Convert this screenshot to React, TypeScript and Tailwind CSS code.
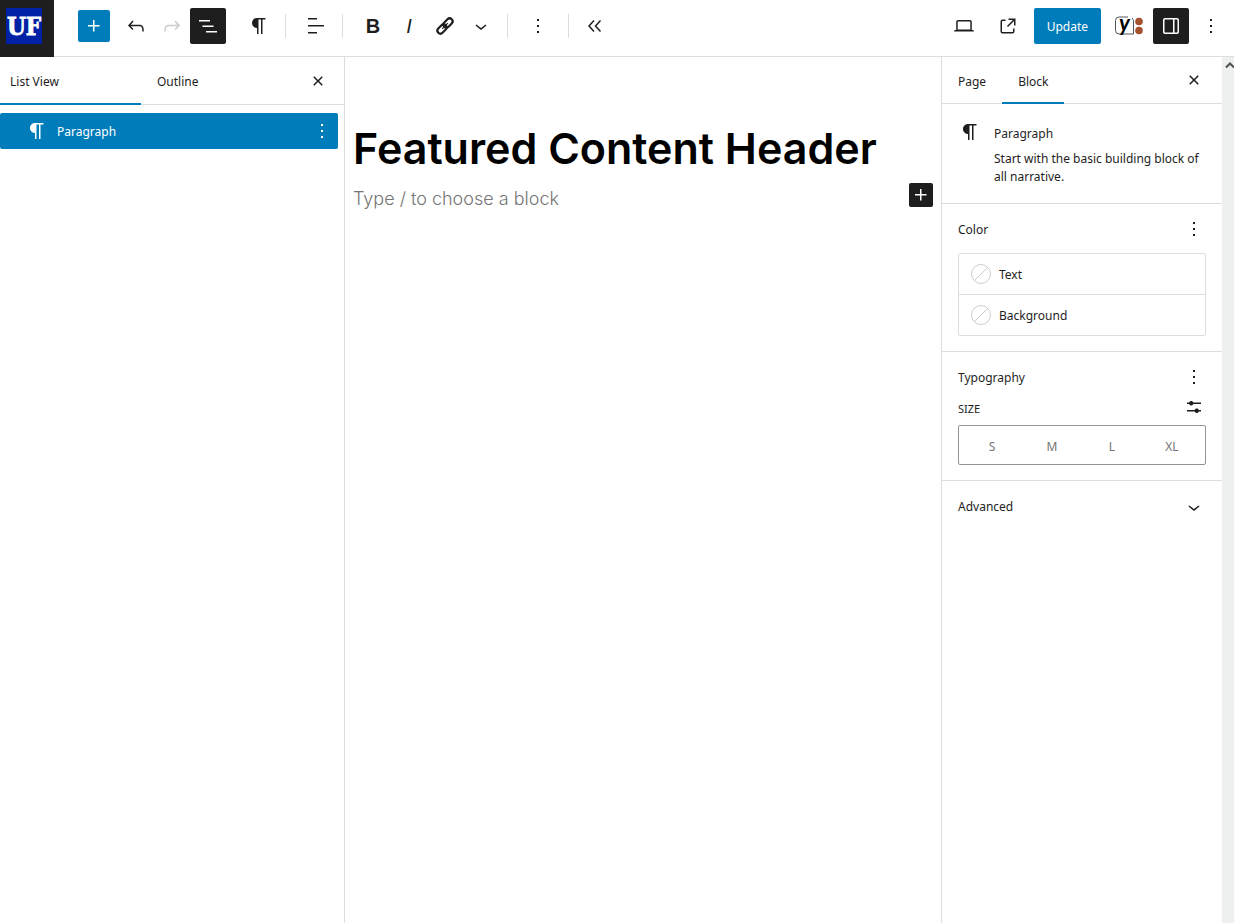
import { useState, type ReactNode } from 'react'

const ICONS = {
  plus: 'M11 12.5V17.5H12.5V12.5H17.5V11H12.5V6H11V11H6V12.5H11Z',
  undo: 'M18.3 11.7c-.6-.6-1.4-.9-2.3-.9H6.7l2.9-3.3-1.1-1-4.5 5L8.5 16l1-1-2.7-2.7H16c.5 0 .9.2 1.3.5 1 1 1 3.4 1 4.5v.3h1.5v-.2c0-1.5 0-4.3-1.5-5.7z',
  redo: 'M15.6 6.5l-1.1 1 2.9 3.3H8c-.9 0-1.7.3-2.3.9-1.4 1.5-1.4 4.2-1.4 5.6v.2h1.5v-.3c0-1.1 0-3.5 1-4.5.3-.3.7-.5 1.3-.5h9.2L14.5 15l1.1 1.1 4.6-4.6-4.6-5z',
  listView: 'M3 6h11v1.5H3V6Zm3.5 5.5h11V13h-11v-1.5ZM21 17H10v1.5h11V17Z',
  paragraph: 'm9.996 14v-.225l.004.001v6.224h1.5v-14.5h2.5v14.5h1.5v-14.5h3v-1.5h-8.504c-2.761 0-5 2.239-5 5 0 2.761 2.239 5 5 5z',
  align: 'M13 5.5H4V4h9v1.5Zm7 7H4V11h16v1.5Zm-7 7H4V18h9v1.5Z',
  chevronDown: 'M17.5 11.6L12 16l-5.5-4.4.9-1.2L12 14l4.5-3.6 1 1.2z',
  more: 'M13 19h-2v-2h2v2zm0-6h-2v-2h2v2zm0-6h-2V5h2v2z',
  close: 'M12 13.06l3.712 3.713 1.061-1.06L13.061 12l3.712-3.712-1.06-1.06L12 10.938 8.288 7.227l-1.061 1.06L10.939 12l-3.712 3.712 1.06 1.061L12 13.061z',
  laptop: 'M20.5 16h-.7V8c0-1.1-.9-2-2-2H6.2c-1.1 0-2 .9-2 2v8h-.7c-.8 0-1.5.7-1.5 1.5h20c0-.8-.7-1.5-1.5-1.5zM5.7 8c0-.3.2-.5.5-.5h11.6c.3 0 .5.2.5.5v7.6H5.7V8z',
  external: 'M19.5 4.5h-7V6h4.44l-5.97 5.97 1.06 1.06L18 7.06v4.44h1.5v-7Zm-13 1a2 2 0 0 0-2 2v10a2 2 0 0 0 2 2h10a2 2 0 0 0 2-2v-3H17v3a.5.5 0 0 1-.5.5h-10a.5.5 0 0 1-.5-.5v-10a.5.5 0 0 1 .5-.5h3V5.5h-3Z',
  drawer: 'M18 4H6c-1.1 0-2 .9-2 2v12c0 1.1.9 2 2 2h12c1.1 0 2-.9 2-2V6c0-1.1-.9-2-2-2zm-4 14.5H6c-.3 0-.5-.2-.5-.5V6c0-.3.2-.5.5-.5h8v13zm4.5-.5c0 .3-.2.5-.5.5h-2.5v-13H18c.3 0 .5.2.5.5v12z',
  settings: 'm19 7.5h-7.628c-.309-.874-1.142-1.5-2.122-1.5-.98 0-1.813.626-2.122 1.5h-2.128v1.5h2.128c.309.874 1.142 1.5 2.122 1.5.98 0 1.813-.626 2.122-1.5h7.628zM19 15h-2.128c-.309-.874-1.142-1.5-2.122-1.5s-1.813.626-2.122 1.5h-7.628v1.5h7.628c.309.874 1.142 1.5 2.122 1.5s1.813-.626 2.122-1.5h2.128z',
}

function Icon({ name }: { name: keyof typeof ICONS }) {
  return (
    <svg width="24" height="24" viewBox="0 0 24 24" fill="currentColor" className="shrink-0" aria-hidden="true">
      <path d={ICONS[name]} />
    </svg>
  )
}

function LinkIcon() {
  return (
    <svg width="24" height="24" viewBox="0 0 24 24" fill="none" stroke="currentColor" strokeWidth="2.2" aria-hidden="true">
      <g transform="rotate(-45 12 12)">
        <rect x="2.5" y="9" width="10.5" height="6" rx="3" />
        <rect x="11" y="9" width="10.5" height="6" rx="3" />
        <path d="M8 12h8" strokeWidth="1.2" />
      </g>
    </svg>
  )
}

function CollapseIcon() {
  return (
    <svg width="24" height="24" viewBox="0 0 24 24" fill="none" stroke="currentColor" strokeWidth="1.5" aria-hidden="true">
      <path d="M11 6.5 6 12l5 5.5M17.500 6.5l-5 5.5 5 5.5" />
    </svg>
  )
}

function YoastIcon() {
  return (
    <svg width="34" height="28" viewBox="-4 0 34 28" className="shrink-0" fill="none" aria-hidden="true">
      <path d="M14 5H5A3.5 3.5 0 0 0 1.5 8.5v10A3.5 3.500 0 0 0 5 22h14.500V9a4 4 0 0 0-1.500-3" stroke="#50575e" />
      <text x="5" y="19" fill="#000" fontFamily="Lato, sans-serif" fontWeight="700" fontStyle="italic" fontSize="22">y</text>
      <circle cx="25" cy="9.5" r="3.8" fill="#a4512f" />
      <circle cx="25" cy="18.5" r="3.8" fill="#a4512f" />
    </svg>
  )
}

function Logo() {
  return (
    <svg width="36" height="36" viewBox="0 0 36 36" role="img" aria-label="UF">
      <rect width="36" height="36" fill="#0021a5" />
      <text
        x="18"
        y="27"
        textAnchor="middle"
        fill="#fff"
        stroke="#fff"
        strokeWidth="0.8"
        fontFamily="'DejaVu Serif Condensed', 'DejaVu Serif', serif"
        fontWeight="700"
        fontSize="24"
      >
        UF
      </text>
    </svg>
  )
}

type ToolProps = { label: string; children: ReactNode; dark?: boolean; disabled?: boolean }

function Tool({ label, children, dark, disabled }: ToolProps) {
  return (
    <button
      aria-label={label}
      disabled={disabled}
      className={`flex size-9 shrink-0 items-center justify-center rounded-xs ${
        dark ? 'bg-[#1e1e1e] text-white' : disabled ? 'text-[#ccc]' : 'text-[#1e1e1e]'
      }`}
    >
      {children}
    </button>
  )
}

function Divider() {
  return <div className="h-6 w-px shrink-0 bg-[#ddd]" />
}

function Header() {
  return (
    <header className="flex h-[57px] shrink-0 border-b border-[#ddd]">
      <a href="#" aria-label="View Pages" className="-mb-px w-[54px] shrink-0 bg-[#1e1e1e] pt-2 pl-[6px]">
        <Logo />
      </a>
      <div className="flex h-[52px] items-center pl-6">
        <button aria-label="Toggle block inserter" className="mr-2 flex size-8 items-center justify-center rounded-xs bg-[#007cba] text-white">
          <Icon name="plus" />
        </button>
        <Tool label="Undo"><Icon name="undo" /></Tool>
        <Tool label="Redo" disabled><Icon name="redo" /></Tool>
        <Tool label="Document Overview" dark><Icon name="listView" /></Tool>
        <div className="flex items-center pr-2 pl-[15px]">
          <Tool label="Paragraph"><Icon name="paragraph" /></Tool>
        </div>
        <Divider />
        <div className="flex items-center pr-2 pl-3">
          <Tool label="Align text"><Icon name="align" /></Tool>
        </div>
        <Divider />
        <div className="flex items-center pr-2 pl-3">
          <Tool label="Bold"><span className="font-['Liberation_Sans',sans-serif] text-[20px] font-bold">B</span></Tool>
          <Tool label="Italic"><span className="font-['Liberation_Sans',sans-serif] text-[20px] italic">I</span></Tool>
          <Tool label="Link"><LinkIcon /></Tool>
          <Tool label="More"><Icon name="chevronDown" /></Tool>
        </div>
        <Divider />
        <div className="flex items-center px-3">
          <Tool label="Options"><Icon name="more" /></Tool>
        </div>
        <Divider />
        <div className="flex items-center px-2">
          <Tool label="Hide block tools"><CollapseIcon /></Tool>
        </div>
      </div>
      <div className="ml-auto flex h-[52px] items-center gap-2 pr-[9px]">
        <Tool label="Preview"><Icon name="laptop" /></Tool>
        <Tool label="View Page"><Icon name="external" /></Tool>
        <button className="h-9 rounded-xs bg-[#007cba] px-[13px] pt-[2px] text-white">Update</button>
        <button aria-label="Yoast SEO" className="flex size-9 items-center justify-center"><YoastIcon /></button>
        <Tool label="Settings" dark><Icon name="drawer" /></Tool>
        <button aria-label="Options" className="flex h-9 w-7 items-center justify-center text-[#1e1e1e]"><Icon name="more" /></button>
      </div>
    </header>
  )
}

function ListViewPanel() {
  const [tab, setTab] = useState('List View')

  return (
    <aside className="w-[345px] shrink-0 border-r border-[#ddd]">
      <div className="flex h-12 border-b border-[#ddd]">
        {['List View', 'Outline'].map((t) => (
          <button
            key={t}
            onClick={() => setTab(t)}
            className={`-mb-px w-[141px] border-b-2 pt-1 text-left ${
              t === tab ? 'border-[#007cba] px-[10px]' : 'border-transparent px-4'
            }`}
          >
            {t}
          </button>
        ))}
        <button aria-label="Close" className="mr-[14px] ml-auto"><Icon name="close" /></button>
      </div>
      <div className="mt-2 mr-[6px] flex h-9 items-center rounded-xs bg-[#007cba] pr-1 pl-[25px] text-white">
        <button className="flex flex-1 items-center gap-2">
          <Icon name="paragraph" />
          <span className="pt-[2px]">Paragraph</span>
        </button>
        <button aria-label="Options for Paragraph"><Icon name="more" /></button>
      </div>
    </aside>
  )
}

function Canvas() {
  return (
    <main className="min-w-0 flex-1 px-2 pt-[63px]">
      <h1 className="font-[Inter,sans-serif] text-[43px] leading-[56px] font-semibold text-black">Featured Content Header</h1>
      <div className="mt-[7px] flex items-start justify-between">
        <p className="pt-[2px] font-[Inter,sans-serif] text-[18px] leading-7 font-light text-[#757575]">Type / to choose a block</p>
        <button aria-label="Add block" className="flex size-6 items-center justify-center rounded-xs bg-[#1e1e1e] text-white">
          <Icon name="plus" />
        </button>
      </div>
    </main>
  )
}

function BlockSidebar() {
  const [tab, setTab] = useState('Block')

  return (
    <aside className="w-[281px] shrink-0 border-l border-[#ddd]">
      <div className="flex h-[47px] border-b border-[#ddd]">
        {['Page', 'Block'].map((t) => (
          <button
            key={t}
            onClick={() => setTab(t)}
            className={`-mb-px border-b-2 px-4 pt-1 ${t === tab ? 'border-[#007cba]' : 'border-transparent'}`}
          >
            {t}
          </button>
        ))}
        <button aria-label="Close Settings" className="mr-4 ml-auto"><Icon name="close" /></button>
      </div>

      <section className="flex h-[100px] gap-3 border-b border-[#ddd] p-4">
        <Icon name="paragraph" />
        <div className="pt-[2px]">
          <h2 className="mb-1 leading-6">Paragraph</h2>
          <p className="leading-[18px]">Start with the basic building block of all narrative.</p>
        </div>
      </section>

      <section className="border-b border-[#ddd] px-4 pt-[13px] pb-[15px]">
        <div className="flex h-6 items-center justify-between">
          <h2 className="pt-[2px]">Color</h2>
          <button aria-label="Color options"><Icon name="more" /></button>
        </div>
        <ul className="mt-3 divide-y divide-[#ddd] rounded-xs border border-[#ddd]">
          {['Text', 'Background'].map((c) => (
            <li key={c}>
              <button className="flex h-10 w-full items-center gap-2 px-3">
                <svg width="20" height="20" viewBox="0 0 20 20" fill="none" stroke="#ccc" aria-hidden="true">
                  <circle cx="10" cy="10" r="9.5" />
                  <path d="M3.5 16.5l13-13" />
                </svg>
                <span className="pt-[2px]">{c}</span>
              </button>
            </li>
          ))}
        </ul>
      </section>

      <section className="border-b border-[#ddd] px-4 pt-[13px] pb-[15px]">
        <div className="flex h-6 items-center justify-between">
          <h2 className="pt-[2px]">Typography</h2>
          <button aria-label="Typography options"><Icon name="more" /></button>
        </div>
        <div className="mt-[6px] flex h-6 items-center justify-between">
          <h3 className="pt-1 text-[11px] uppercase">Size</h3>
          <button aria-label="Set custom size"><Icon name="settings" /></button>
        </div>
        <div className="mt-[6px] flex h-10 rounded-xs border border-[#949494] px-[3px] text-[#757575]">
          {['S', 'M', 'L', 'XL'].map((s) => (
            <button key={s} className="flex-1 pt-1">{s}</button>
          ))}
        </div>
      </section>

      <button className="flex h-[52px] w-full items-center justify-between px-4">
        Advanced
        <Icon name="chevronDown" />
      </button>
    </aside>
  )
}

export default function App() {
  return (
    <div className="flex min-h-screen flex-col bg-white font-['Noto_Sans',sans-serif] text-[12px] text-[#1e1e1e]">
      <Header />
      <div className="flex flex-1">
        <ListViewPanel />
        <Canvas />
        <BlockSidebar />
        <div className="flex w-3 shrink-0 justify-center overflow-hidden bg-[#eef0f0] pt-1">
          <svg width="12" height="8" viewBox="0 0 12 8" fill="none" stroke="#505050" strokeWidth="2" aria-hidden="true">
            <path d="M4 6.5 8 2.5l4 4" />
          </svg>
        </div>
      </div>
    </div>
  )
}
